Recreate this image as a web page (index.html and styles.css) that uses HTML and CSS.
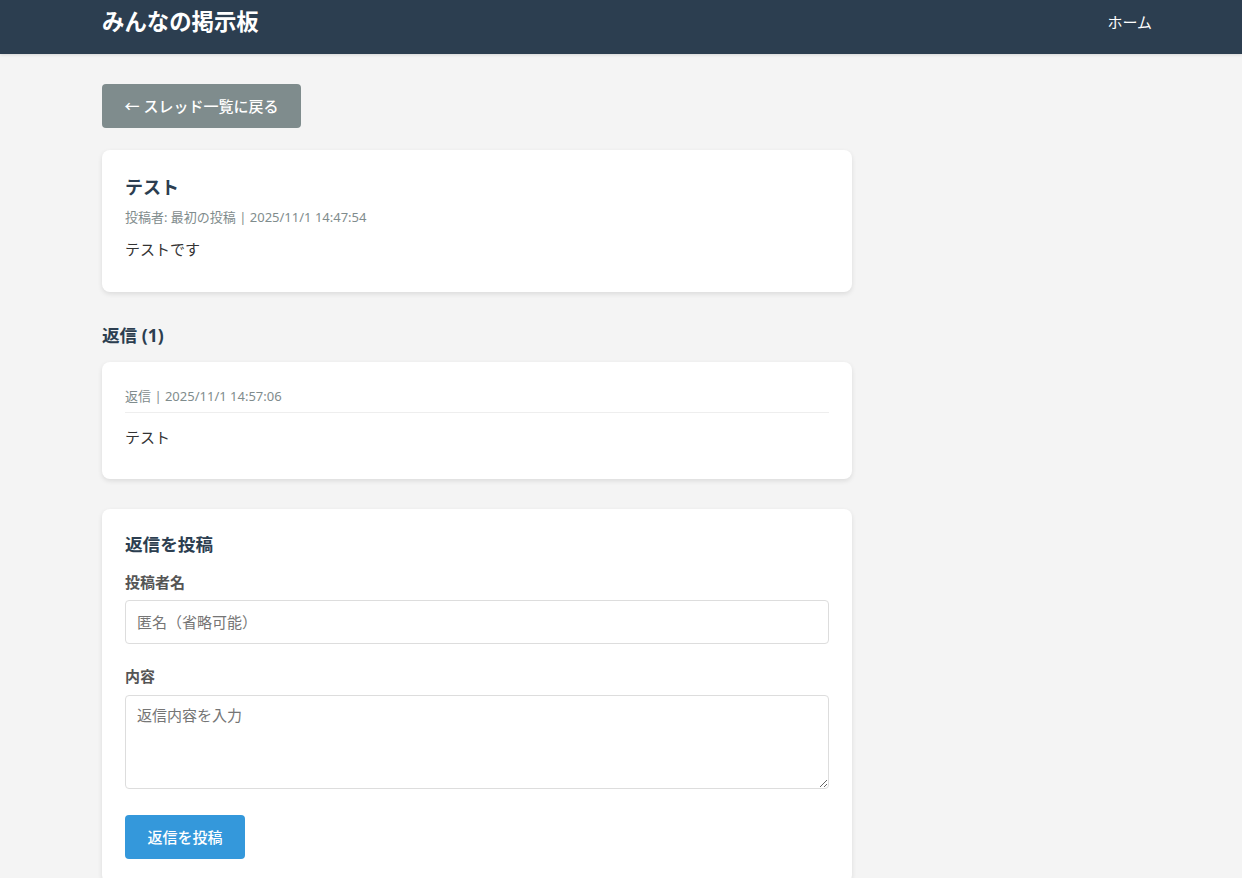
FILE: index.html
```html
<!DOCTYPE html>
<html lang="ja">
<head>
<meta charset="utf-8">
<title>みんなの掲示板</title>
<link rel="stylesheet" href="styles.css">
</head>
<body>
<header class="site-header">
  <div class="header-inner">
    <h1 class="site-title">みんなの掲示板</h1>
    <nav class="nav"><a class="nav-link" href="#">ホーム</a></nav>
  </div>
</header>
<main class="main">
  <a class="back-btn" href="#">← スレッド一覧に戻る</a>

  <section class="card thread">
    <h2 class="thread-title">テスト</h2>
    <div class="meta">投稿者: 最初の投稿 | 2025/11/1 14:47:54</div>
    <p class="body-text">テストです</p>
  </section>

  <h3 class="section-title">返信 (1)</h3>

  <section class="card reply">
    <div class="meta reply-meta">返信 | 2025/11/1 14:57:06</div>
    <p class="body-text">テスト</p>
  </section>

  <section class="card form-card">
    <h3 class="form-title">返信を投稿</h3>
    <div class="form-group">
      <label class="label">投稿者名</label>
      <input class="input" type="text" placeholder="匿名（省略可能）">
    </div>
    <div class="form-group last">
      <label class="label">内容</label>
      <textarea class="textarea" placeholder="返信内容を入力"></textarea>
    </div>
    <button class="submit-btn" type="button">返信を投稿</button>
  </section>
</main>
</body>
</html>
```
FILE: styles.css
```css
* { box-sizing: border-box; }
html, body { margin: 0; padding: 0; }
body {
  background: #f4f4f4;
  font-family: "Noto Sans", "Noto Sans CJK JP", sans-serif;
  color: #333;
  font-size: 15px;
  line-height: 1.5;
}
.site-header {
  background: #2c3e50;
  height: 54px;
  box-shadow: 0 1px 3px rgba(0,0,0,0.12);
}
.header-inner {
  height: 54px;
  padding: 0 90px 0 102px;
  display: flex;
  align-items: center;
  justify-content: space-between;
}
.site-title {
  margin: 0;
  color: #fff;
  font-size: 22.4px;
  font-weight: 700;
  line-height: 1;
  position: relative;
  top: -5px;
}
.nav-link {
  color: #fff;
  text-decoration: none;
  font-size: 15px;
  position: relative;
  top: -5px;
}
.main {
  width: 750px;
  margin-left: 102px;
  padding-top: 30px;
}
.back-btn {
  display: inline-block;
  background: #7f8c8d;
  color: #fff;
  text-decoration: none;
  font-size: 15px;
  font-weight: 500;
  height: 44px;
  line-height: 44px;
  padding: 0 22.5px;
  border-radius: 4px;
  margin-bottom: 22px;
}
.card {
  background: #fff;
  border-radius: 8px;
  box-shadow: 0 2px 5px rgba(0,0,0,0.1);
  padding: 24px 23px;
}
.thread { padding-bottom: 31px; margin-bottom: 31px; }
.thread-title {
  margin: 0 0 6px;
  font-size: 18px;
  line-height: 1.5;
  color: #2c3e50;
  font-weight: 700;
}
.meta {
  font-size: 13px;
  color: #7f8c8d;
  line-height: 1.6;
}
.thread .meta { margin-bottom: 9px; }
.body-text {
  margin: 0;
  font-size: 15px;
  line-height: 1.6;
  color: #333;
}
.section-title {
  margin: 0 0 15px;
  font-size: 17.6px;
  line-height: 1.4;
  color: #2c3e50;
  font-weight: 700;
}
.reply { padding-bottom: 30px; margin-bottom: 30px; }
.reply-meta {
  padding-bottom: 5px;
  border-bottom: 1px solid #eee;
  margin-bottom: 12px;
}
.form-card { padding-top: 23px; }
.form-title {
  margin: 0 0 14px;
  font-size: 17.6px;
  line-height: 1.4;
  color: #2c3e50;
  font-weight: 700;
}
.form-group { margin-bottom: 21px; }
.form-group.last { margin-bottom: 26px; }
.label {
  display: block;
  font-size: 15px;
  font-weight: 700;
  color: #555;
  line-height: 1.5;
  margin-bottom: 7px;
}
.input, .textarea {
  display: block;
  width: 100%;
  border: 1px solid #ddd;
  border-radius: 4px;
  font-family: "Noto Sans", "Noto Sans CJK JP", sans-serif;
  font-size: 15px;
  color: #333;
  padding: 0 11px;
  background: #fff;
}
.input { height: 44px; }
.textarea { height: 94px; padding-top: 8px; resize: vertical; line-height: 1.5; }
.input::placeholder, .textarea::placeholder { color: #757575; }
.submit-btn {
  background: #3498db;
  color: #fff;
  border: none;
  border-radius: 4px;
  height: 44px;
  padding: 0 22.5px;
  font-family: "Noto Sans", "Noto Sans CJK JP", sans-serif;
  font-size: 15px;
  font-weight: 500;
  cursor: pointer;
}
```
